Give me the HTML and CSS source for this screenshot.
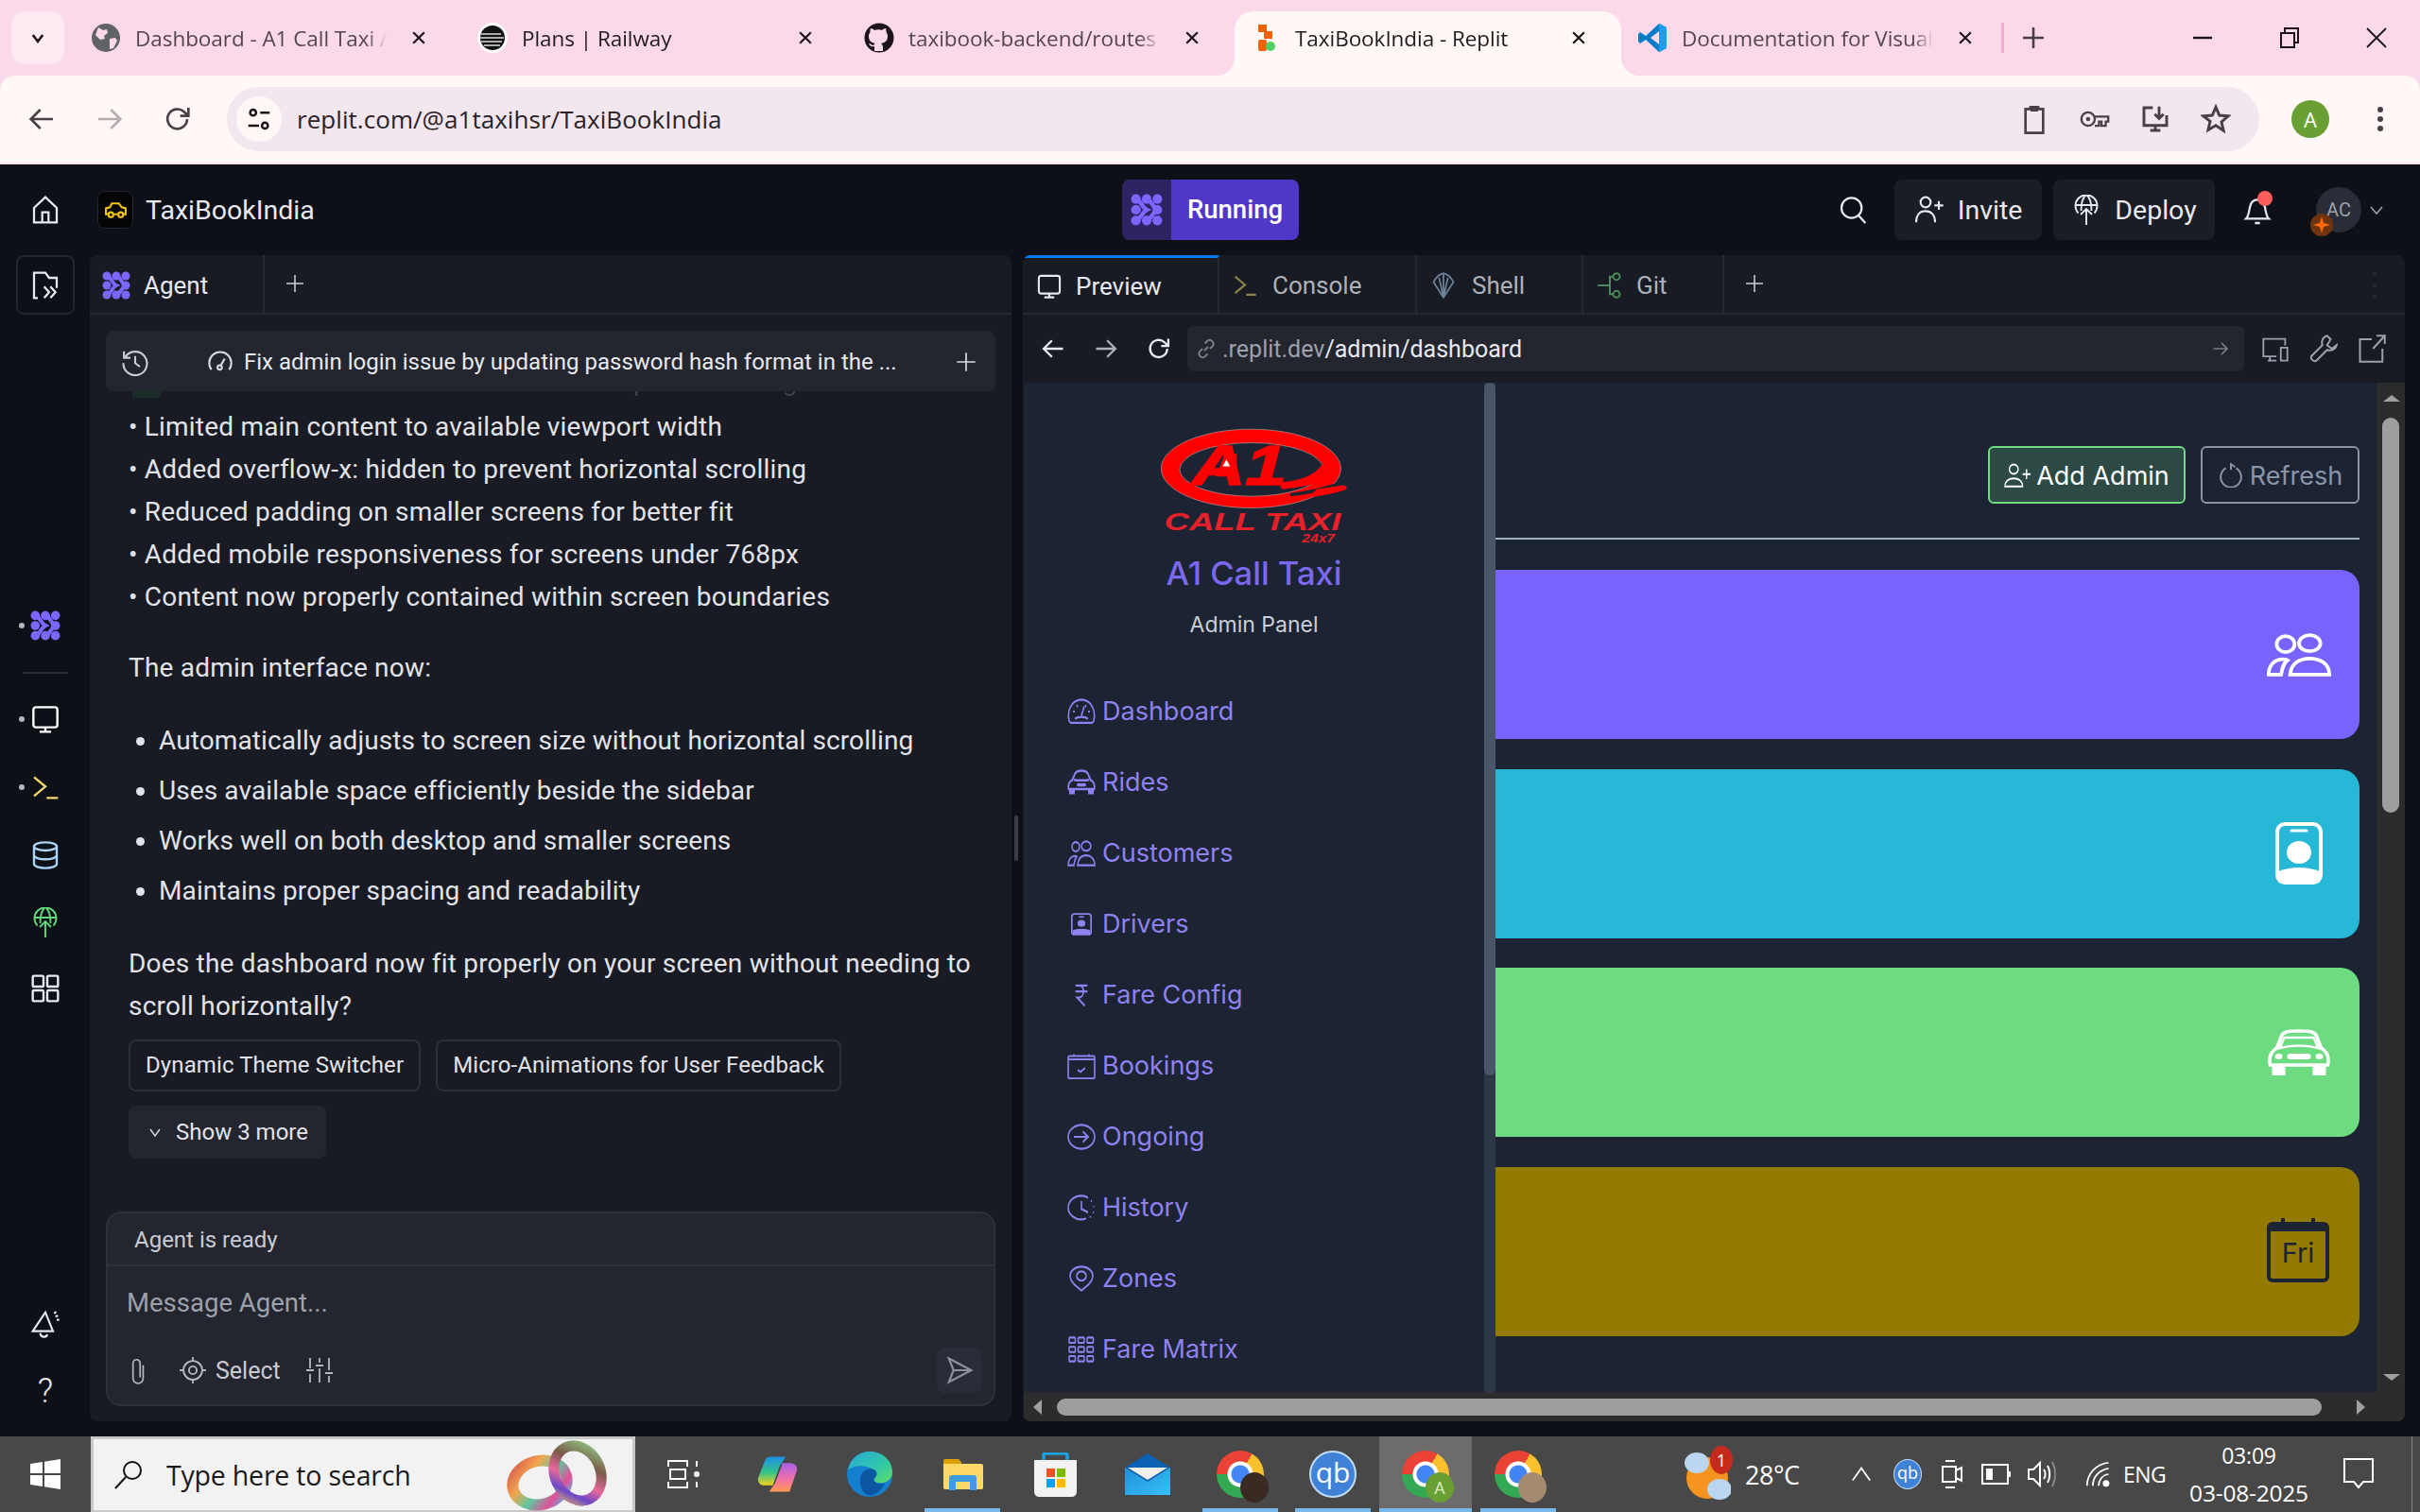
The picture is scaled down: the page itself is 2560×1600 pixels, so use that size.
FILE: index.html
```html
<!DOCTYPE html>
<html lang="en">
<head>
    <meta charset="UTF-8">
    <title>TaxiBookIndia - Replit</title>
    <link rel="stylesheet" href="styles.css">
</head>
<body>
    <svg class="sprite">
        <defs>
            <linearGradient id="ring-a" x1="0" y1="0" x2="1" y2="1">
                <stop offset="0" stop-color="#d8584c"/><stop offset=".3" stop-color="#f2a64e"/><stop offset=".55" stop-color="#5fc8a0"/><stop offset=".8" stop-color="#e0509a"/><stop offset="1" stop-color="#4cc0e8"/>
            </linearGradient>
            <linearGradient id="ring-b" x1="1" y1="0" x2="0" y2="1">
                <stop offset="0" stop-color="#8fd08a"/><stop offset=".35" stop-color="#7a5a48"/><stop offset=".6" stop-color="#e8689a"/><stop offset=".8" stop-color="#6a48c8"/><stop offset="1" stop-color="#f0b860"/>
            </linearGradient>
            <linearGradient id="cop-a" x1="0" y1="0" x2="0" y2="1">
                <stop offset="0" stop-color="#1b8fe8"/><stop offset=".55" stop-color="#35c48a"/><stop offset="1" stop-color="#f2d21c"/>
            </linearGradient>
            <linearGradient id="cop-b" x1="0" y1="0" x2="0" y2="1">
                <stop offset="0" stop-color="#a860e8"/><stop offset=".55" stop-color="#f070a8"/><stop offset="1" stop-color="#ff9a50"/>
            </linearGradient>
            <linearGradient id="edge-a" x1="0" y1="0" x2="1" y2="1">
                <stop offset="0" stop-color="#2aa8d8"/><stop offset=".6" stop-color="#30c8a8"/><stop offset="1" stop-color="#60e060"/>
            </linearGradient>
            <linearGradient id="mail-a" x1="0" y1="0" x2="1" y2="1">
                <stop offset="0" stop-color="#1e8fdc"/><stop offset="1" stop-color="#38c0f5"/>
            </linearGradient>
        </defs>
        <symbol id="i-agent" viewBox="0 0 24 24">
            <g fill="currentColor">
                <circle cx="4" cy="4" r="3.600"/><circle cx="12" cy="4" r="3.600"/><circle cx="20" cy="4" r="3.600"/>
                <circle cx="4" cy="12" r="3.600"/><circle cx="20" cy="12" r="3.600"/>
                <circle cx="4" cy="20" r="3.600"/><circle cx="12" cy="20" r="3.600"/><circle cx="20" cy="20" r="3.600"/>
            </g>
            <path d="M4 4C8 5 8 10 12 12C8 14 8 19 4 20M12 4C16 5 16 10 20 12C16 14 16 19 12 20" fill="none" stroke="currentColor" stroke-width="3.200"/>
        </symbol>
        <symbol id="i-back" viewBox="0 0 24 24"><path d="M21 12H4M11 4.500 3.500 12l7.500 7.500" fill="none" stroke="currentColor" stroke-width="2"/></symbol>
        <symbol id="i-fwd" viewBox="0 0 24 24"><path d="M3 12h17M13 4.500l7.500 7.500-7.500 7.500" fill="none" stroke="currentColor" stroke-width="2"/></symbol>
        <symbol id="i-reload" viewBox="0 0 24 24"><path d="M19.500 12A7.800 7.800 0 1 1 17 6.200L20 9M20.500 3v6.500H14" fill="none" stroke="currentColor" stroke-width="2"/></symbol>
        <symbol id="i-close" viewBox="0 0 24 24"><path d="M5 5l14 14M19 5 5 19" fill="none" stroke="currentColor" stroke-width="2.600"/></symbol>
        <symbol id="i-plus" viewBox="0 0 24 24"><path d="M12 3v18M3 12h18" fill="none" stroke="currentColor" stroke-width="1.600"/></symbol>
        <symbol id="i-monitor" viewBox="0 0 24 24"><path d="M4.500 2.500h15a2 2 0 0 1 2 2v12a2 2 0 0 1-2 2h-15a2 2 0 0 1-2-2v-12a2 2 0 0 1 2-2zM12 18.500v3.500M7.500 22h9" fill="none" stroke="currentColor" stroke-width="1.800"/></symbol>
        <symbol id="i-console" viewBox="0 0 24 24"><path d="M3 4l9 7.500L3 19M13 20.500h9" fill="none" stroke="currentColor" stroke-width="1.800"/></symbol>
        <symbol id="i-db" viewBox="0 0 24 24"><g fill="none" stroke="currentColor" stroke-width="1.800"><ellipse cx="12" cy="5" rx="9" ry="3.200"/><path d="M3 5v14c0 1.800 4 3.200 9 3.200s9-1.400 9-3.200V5M3 12c0 1.800 4 3.200 9 3.200s9-1.400 9-3.200"/></g></symbol>
        <symbol id="i-deploy" viewBox="0 0 24 32"><g fill="none" stroke="currentColor" stroke-width="1.900"><path d="M12 32V15M6 21l6-6 6 6"/><path d="M3.500 19.500A11.500 11.500 0 1 1 20.500 19.500M.5 11h23M12 0C8 3 6.500 8 6.500 17M12 0c4 3 5.500 8 5.500 17"/></g></symbol>
        <symbol id="i-grid" viewBox="0 0 24 24"><g fill="none" stroke="currentColor" stroke-width="1.800"><rect x="2" y="2" width="8.500" height="8.500" rx="1"/><rect x="13.500" y="2" width="8.500" height="8.500" rx="1"/><rect x="2" y="13.500" width="8.500" height="8.500" rx="1"/><rect x="13.500" y="13.500" width="8.500" height="8.500" rx="1"/></g></symbol>
        <symbol id="i-people" viewBox="0 0 36 24"><g fill="none" stroke="currentColor" stroke-width="2"><ellipse cx="10.500" cy="6" rx="5" ry="4.500"/><ellipse cx="24" cy="5.500" rx="6" ry="4.500"/><path d="M1 23c0-5 3-8.500 8-8.500 1 0 2 .2 2.500.5C9 17 8.500 20 8 23zM13 23c.5-6 5-9 11-9s11 3 11 9z"/></g></symbol>
        <symbol id="i-badge" viewBox="0 0 50 66"><rect x="2" y="2" width="46" height="62" rx="8" fill="none" stroke="currentColor" stroke-width="4"/><path d="M17 9h16" stroke="currentColor" stroke-width="3" stroke-linecap="round"/><ellipse cx="25" cy="32" rx="13" ry="12" fill="currentColor"/><path d="M3 52Q25 44 47 52V64H3z" fill="currentColor"/></symbol>
        <symbol id="i-car" viewBox="0 0 67 50"><g fill="none" stroke="currentColor" stroke-width="3.600"><path d="M3 38C1 28 5 23 10 20L15 7C17 3 21 2 33.500 2S50 3 52 7L57 20C62 23 66 28 64 38z"/><path d="M13 20Q33.500 15 54 20L49 9H18z" stroke-width="2.600"/></g><path d="M5 38h14v11H5zM48 38h14v11H48z" fill="currentColor"/><ellipse cx="12" cy="29" rx="4" ry="3" fill="currentColor"/><ellipse cx="55" cy="29" rx="4" ry="3" fill="currentColor"/><rect x="21" y="26" width="25" height="6" rx="3" fill="currentColor"/></symbol>
        <symbol id="i-gauge" viewBox="0 0 30 20"><g fill="none" stroke="currentColor" stroke-width="1.600"><path d="M2 17C-1 8 6 1 15 1s16 7 13 16c-.3 1-1 1.500-2 1.500H4c-1 0-1.700-.5-2-1.500z"/><path d="M15 13l3-7M6 10h2M22 10h2M10 5l1 1.500M20 5l-1 1.500M8 15.500c3-2 11-2 14 0"/></g></symbol>
        <symbol id="i-ring-arrow" viewBox="0 0 30 20"><g fill="none" stroke="currentColor" stroke-width="1.600"><ellipse cx="15" cy="10" rx="14" ry="9"/><path d="M7 10h15M16.500 6l5.500 4-5.500 4"/></g></symbol>
        <symbol id="i-clock" viewBox="0 0 30 20"><g fill="none" stroke="currentColor" stroke-width="1.600"><path d="M20 18c-3 1-8 1-11 0C3 16 1 13 1 10c0-5 6-9 14-9 3 0 5 .5 7 1.500" /><path d="M15 5v6l7 2.500"/><path d="M25 4.500l1 .8M28 8.500v1M28 13l-.5 1M25 16.500l-1 .7" stroke-width="1.400"/></g></symbol>
        <symbol id="i-pin" viewBox="0 0 30 20"><g fill="none" stroke="currentColor" stroke-width="1.600"><path d="M15 19C8 15 3 12 3 8c0-4 5-7 12-7s12 3 12 7c0 4-5 7-12 11z"/><ellipse cx="15" cy="8" rx="5" ry="3.500"/></g></symbol>
        <symbol id="i-matrix" viewBox="0 0 30 20"><g fill="none" stroke="currentColor" stroke-width="1.500"><rect x="2" y="1" width="6.500" height="4" rx=".8"/><rect x="11.500" y="1" width="6.500" height="4" rx=".8"/><rect x="21" y="1" width="6.500" height="4" rx=".8"/><rect x="2" y="8" width="6.500" height="4" rx=".8"/><rect x="11.500" y="8" width="6.500" height="4" rx=".8"/><rect x="21" y="8" width="6.500" height="4" rx=".8"/><rect x="2" y="15" width="6.500" height="4" rx=".8"/><rect x="11.500" y="15" width="6.500" height="4" rx=".8"/><rect x="21" y="15" width="6.500" height="4" rx=".8"/></g></symbol>
        <symbol id="i-cal" viewBox="0 0 30 20"><g fill="none" stroke="currentColor" stroke-width="1.600"><rect x="1" y="2.500" width="28" height="17" rx="1.500"/><path d="M1 5h28M7 1v2M23 1v2M11 13l3 1.500 5-3"/></g></symbol>
        <symbol id="i-rupee" viewBox="0 0 20 20"><path d="M3 2h14M3 7h14M3 2h5c6 0 6 10-1 10H5l9 7" fill="none" stroke="currentColor" stroke-width="1.800"/></symbol>
        <symbol id="i-carsm" viewBox="0 0 30 20"><g fill="none" stroke="currentColor" stroke-width="1.800"><path d="M1.500 15c-1-3.500 1-6 4-7l2.500-4.500C9 2 11 1 15 1s6 1 7 2.500L24.500 8c3 1 5 3.500 4 7z"/><path d="M7 8c3 .6 13 .6 16 0"/></g><path d="M2 15h6v4H2zM22 15h6v4h-6z" fill="currentColor"/><rect x="10" y="10.500" width="10" height="2.500" rx="1.200" fill="currentColor"/></symbol>
        <symbol id="i-peoplesm" viewBox="0 0 30 20"><g fill="none" stroke="currentColor" stroke-width="1.500"><ellipse cx="9" cy="5" rx="4" ry="3.500"/><ellipse cx="20" cy="4.500" rx="5" ry="3.500"/><path d="M1 19c0-4 3-7 7-7 1 0 1.500.2 2 .4C8 14 7.500 16.500 7 19zM11 19c.5-5 4-7.500 9-7.500s9 2.500 9 7.500z"/></g></symbol>
        <symbol id="i-badgesm" viewBox="0 0 26 26"><g fill="none" stroke="currentColor" stroke-width="2"><rect x="1" y="1" width="24" height="24" rx="3"/><path d="M10 4.500h6"/></g><ellipse cx="13" cy="12" rx="5" ry="4" fill="currentColor"/><path d="M2 25v-5c5-2 17-2 22 0v5z" fill="currentColor"/></symbol>
    </svg>

    <div class="tabstrip">
        <div class="tab-menu"><svg class="ico-16" viewBox="0 0 24 24"><path d="M5 8l7 9 7-9" fill="none" stroke="#1c1418" stroke-width="3.500"/></svg></div>
        <div class="tab">
            <span class="favicon"><svg viewBox="0 0 32 32"><circle cx="16" cy="16" r="15" fill="#5f6368"/><path d="M8 5l5 3 4-1 1 4-4 3 1 3-5 1-5-5zM20 17l6-1 2 3-4 8-4 1z" fill="#fbd9ea"/></svg></span>
            <span class="tab-title">Dashboard - A1 Call Taxi /</span>
            <svg class="tab-x"><use href="#i-close"/></svg>
        </div>
        <div class="tab">
            <span class="favicon"><svg viewBox="0 0 32 32"><circle cx="16" cy="16" r="16" fill="#fff"/><circle cx="16" cy="16" r="13" fill="#111"/><path d="M4 12h21M3 16h25M4 20h22M7 24h17" stroke="#ddd" stroke-width="1.500"/></svg></span>
            <span class="tab-title tab-dark">Plans | Railway</span>
            <svg class="tab-x"><use href="#i-close"/></svg>
        </div>
        <div class="tab">
            <span class="favicon"><svg viewBox="0 0 32 32"><circle cx="16" cy="16" r="15.500" fill="#1c1418"/><path d="M11 30v-5c-4 1-5-1-6-3 2 0 3 2 5 2 .5-1 1-2 2-2-5-1-7-3-7-8 0-2 1-3 1.500-4 0-1 0-3 .5-4 2 0 3 1 4 2 3-1 6-1 8 0 1-1 2-2 4-2 .5 1 .5 3 .5 4 .5 1 1.500 2 1.500 4 0 5-2 7-7 8 1 .7 2 2 2 4v4z" fill="#fbd9ea"/></svg></span>
            <span class="tab-title">taxibook-backend/routes</span>
            <svg class="tab-x"><use href="#i-close"/></svg>
        </div>
        <div class="tab tab-active">
            <span class="favicon"><svg viewBox="0 0 32 32"><rect x="8" y="2" width="9" height="8" fill="#f26207"/><rect x="14" y="9" width="9" height="8" fill="#f26207"/><rect x="8" y="18" width="9" height="12" rx="2" fill="#f26207"/><circle cx="21" cy="25" r="5" fill="#4fd16a"/></svg></span>
            <span class="tab-title tab-dark">TaxiBookIndia - Replit</span>
            <svg class="tab-x"><use href="#i-close"/></svg>
        </div>
        <div class="tab tab-last">
            <span class="favicon"><svg viewBox="0 0 32 32"><path d="M23 1l8 4v22l-8 4-14-13-6 4-2-2v-8l2-2 6 4z" fill="#0a7cc7"/><path d="M23 9l-9 7 9 7z" fill="#fbd9ea"/><path d="M23 1l8 4v22l-8 4z" fill="#1f9cf0"/></svg></span>
            <span class="tab-title">Documentation for Visual</span>
            <svg class="tab-x"><use href="#i-close"/></svg>
        </div>
        <span class="tab-sep"></span>
        <svg class="new-tab" viewBox="0 0 24 24"><path d="M12 1v22M1 12h22" stroke="#4a3f47" stroke-width="2.600"/></svg>
        <div class="win-btns">
            <svg viewBox="0 0 24 24"><path d="M2 12h20" stroke="#1c1418" stroke-width="2.400"/></svg>
            <svg viewBox="0 0 24 24"><path d="M3 7h14v15H3zM7 7V2h14v15h-4" fill="none" stroke="#1c1418" stroke-width="2"/></svg>
            <svg viewBox="0 0 24 24"><path d="M2 2l20 20M22 2 2 22" stroke="#1c1418" stroke-width="1.800"/></svg>
        </div>
    </div>

    <div class="toolbar">
        <svg class="nav-btn"><use href="#i-back"/></svg>
        <svg class="nav-btn nav-off"><use href="#i-fwd"/></svg>
        <svg class="nav-btn"><use href="#i-reload"/></svg>
        <div class="omnibox">
            <span class="site-ico"><svg viewBox="0 0 24 24"><g fill="none" stroke="#1c1418" stroke-width="2"><circle cx="7" cy="6.500" r="2.500"/><circle cx="17" cy="17.500" r="2.500"/><path d="M13 6.500h8M3 17.500h9"/></g></svg></span>
            <span class="url-text">replit.com/@a1taxihsr/TaxiBookIndia</span>
            <div class="omni-icons">
                <svg viewBox="0 0 24 24"><path d="M5 4h14v19H5zM9 4V2.500h6V4" fill="none" stroke="#4a3f47" stroke-width="2"/><path d="M9 3h6v3H9z" fill="#4a3f47"/></svg>
                <svg viewBox="0 0 36 24"><g fill="none" stroke="#4a3f47" stroke-width="2.600"><circle cx="10" cy="12" r="8"/><path d="M18 9h16v6h-3v5h-5v-5h-3v5h-5"/></g><circle cx="10" cy="12" r="2.500" fill="#4a3f47"/></svg>
                <svg viewBox="0 0 24 24"><path d="M10 3H3v14h18V9M8 21h8M12 17v4M15 2v9M11.500 8l3.500 3.500L18.500 8" fill="none" stroke="#4a3f47" stroke-width="2.200"/></svg>
                <svg viewBox="0 0 24 24"><path d="M12 2.500l2.800 6.500 7 .6-5.300 4.600 1.600 6.900L12 17l-6.100 3.600 1.600-6.900L2.200 9.600l7-.6z" fill="none" stroke="#4a3f47" stroke-width="2.200"/></svg>
            </div>
        </div>
        <span class="profile">A</span>
        <svg class="kebab" viewBox="0 0 8 32"><circle cx="4" cy="6" r="3" fill="#4a3f47"/><circle cx="4" cy="16" r="3" fill="#4a3f47"/><circle cx="4" cy="26" r="3" fill="#4a3f47"/></svg>
    </div>

    <div class="app">
        <div class="topbar">
            <div class="top-left">
                <span class="home"><svg viewBox="0 0 24 24"><path d="M3 10.500 12 2l9 8.500V22H3zM9.500 22v-8h5v8" fill="none" stroke="#e8e9ee" stroke-width="1.700"/></svg></span>
                <span class="project-ico"><svg viewBox="0 0 24 16"><g fill="none" stroke="#f5c518" stroke-width="2"><path d="M4 12H2V6L6 5 8 1H15L18 5 22 6V12H20M10 12H14"/><circle cx="7" cy="12.500" r="2.500"/><circle cx="17" cy="12.500" r="2.500"/></g></svg></span>
                <span class="project-name">TaxiBookIndia</span>
            </div>
            <div class="run-btn">
                <span class="run-ico"><svg><use href="#i-agent"/></svg></span>
                <span class="run-label">Running</span>
            </div>
            <div class="top-right">
                <svg class="top-search" viewBox="0 0 24 24"><circle cx="11" cy="10.500" r="8" fill="none" stroke="#e8e9ee" stroke-width="1.700"/><path d="M16.500 16.500 22 22.500" stroke="#e8e9ee" stroke-width="1.700"/></svg>
                <div class="top-btn btn-invite"><svg viewBox="0 0 24 24"><g fill="none" stroke="#e8e9ee" stroke-width="1.600"><circle cx="9" cy="6" r="4"/><path d="M1.500 22c0-6 3-9 7.500-9s7.500 3 7.500 9M19.500 5v7M16 8.500h7"/></g></svg>Invite</div>
                <div class="top-btn btn-deploy"><svg><use href="#i-deploy"/></svg>Deploy</div>
                <span class="bell"><svg viewBox="0 0 24 24"><path d="M3 19c2-2 2-4 3-9 .7-4 3-6 6-6s5.300 2 6 6c1 5 1 7 3 9zM10 22.500h4" fill="none" stroke="#e8e9ee" stroke-width="1.700"/></svg><i class="bell-dot"></i></span>
                <span class="user">AC<svg class="user-badge" viewBox="0 0 24 24"><circle cx="12" cy="12" r="12" fill="#6e3410"/><path d="M12 3l2 7 7 2-7 2-2 7-2-7-7-2 7-2z" fill="#ff6a00"/></svg></span>
                <svg class="user-chev" viewBox="0 0 16 16"><path d="M2 5l6 7 6-7" fill="none" stroke="#9da1ab" stroke-width="1.500"/></svg>
            </div>
        </div>

        <div class="workspace">
            <div class="rail">
                <div class="rail-files"><svg viewBox="0 0 24 24"><path d="M6 22H3V2h9l3 4h6v8M11 13l4 4.500-4 4.500M16 13l4 4.500-4 4.500" fill="none" stroke="#e8e9ee" stroke-width="1.700"/></svg></div>
                <div class="rail-item rail-agent on"><svg><use href="#i-agent"/></svg></div>
                <div class="rail-div"></div>
                <div class="rail-item rail-monitor on"><svg><use href="#i-monitor"/></svg></div>
                <div class="rail-item rail-console on"><svg><use href="#i-console"/></svg></div>
                <div class="rail-item rail-db"><svg><use href="#i-db"/></svg></div>
                <div class="rail-item rail-deploy"><svg><use href="#i-deploy"/></svg></div>
                <div class="rail-item rail-grid"><svg><use href="#i-grid"/></svg></div>
                <div class="rail-item rail-bell"><svg viewBox="0 0 24 24"><path d="M2 17 12 2l6 15zM8 18.500c0 3.500 5 4 5.500 1M19 3l1.500-1.500M21 8h2M20 5.500l2-.8" fill="none" stroke="#e8e9ee" stroke-width="1.600"/></svg></div>
                <div class="rail-item rail-help">?</div>
            </div>

            <section class="agent-panel">
                <div class="pane-tabs">
                    <div class="pane-tab agent-tab"><svg class="agent-ico"><use href="#i-agent"/></svg>Agent</div>
                    <svg class="pane-plus"><use href="#i-plus"/></svg>
                </div>
                <div class="messages">
                    <div class="thread-head">
                        <svg class="th-hist" viewBox="0 0 24 24"><path d="M3.500 8A10 10 0 1 1 2 13M2.500 3v5.500H8M12 7v6l4 3" fill="none" stroke="#c9cbd3" stroke-width="1.700"/></svg>
                        <svg class="th-gauge" viewBox="0 0 24 24"><path d="M4 19A10 10 0 1 1 20 19M12 16l4-7" fill="none" stroke="#d8dae0" stroke-width="1.800"/><circle cx="11.500" cy="17" r="2" fill="none" stroke="#d8dae0" stroke-width="1.800"/></svg>
                        <span class="th-title">Fix admin login issue by updating password hash format in the ...</span>
                        <svg class="th-plus"><use href="#i-plus"/></svg>
                    </div>
                    <p class="msg-line msg-faded"><span class="check"></span>Fixed main content width for better responsive design</p>
                    <p class="msg-line">• Limited main content to available viewport width</p>
                    <p class="msg-line">• Added overflow-x: hidden to prevent horizontal scrolling</p>
                    <p class="msg-line">• Reduced padding on smaller screens for better fit</p>
                    <p class="msg-line">• Added mobile responsiveness for screens under 768px</p>
                    <p class="msg-line">• Content now properly contained within screen boundaries</p>
                    <p class="msg-line msg-para">The admin interface now:</p>
                    <ul class="msg-list">
                        <li>Automatically adjusts to screen size without horizontal scrolling</li>
                        <li>Uses available space efficiently beside the sidebar</li>
                        <li>Works well on both desktop and smaller screens</li>
                        <li>Maintains proper spacing and readability</li>
                    </ul>
                    <p class="msg-line msg-ask">Does the dashboard now fit properly on your screen without needing to scroll horizontally?</p>
                    <div class="chips">
                        <span class="chip">Dynamic Theme Switcher</span>
                        <span class="chip">Micro-Animations for User Feedback</span>
                    </div>
                    <div class="show-more"><svg viewBox="0 0 16 16"><path d="M3 5l5 7 5-7" fill="none" stroke="#d8dae0" stroke-width="1.400"/></svg>Show 3 more</div>
                </div>
                <div class="composer">
                    <div class="comp-status">Agent is ready</div>
                    <div class="comp-input">Message Agent...</div>
                    <div class="comp-tools">
                        <svg class="ct-clip" viewBox="0 0 20 28"><path d="M15 8v13a5 5 0 0 1-10 0V6a3.500 3.500 0 0 1 7 0v14" fill="none" stroke="#b4b7c0" stroke-width="1.600" transform="translate(1 1)"/></svg>
                        <svg class="ct-target" viewBox="0 0 24 24"><g fill="none" stroke="#b4b7c0" stroke-width="1.600"><circle cx="12" cy="12" r="8.500"/><circle cx="12" cy="12" r="3.500"/><path d="M12 0v3.500M12 20.500V24M0 12h3.500M20.500 12H24"/></g></svg>
                        <span class="ct-select">Select</span>
                        <svg class="ct-sliders" viewBox="0 0 28 28"><path d="M4 1v11M4 18v9M14 1v5M14 12v15M24 1v13M24 20v7M0 14h8M10 9h8M20 17h8" fill="none" stroke="#b4b7c0" stroke-width="1.800"/></svg>
                        <span class="ct-send"><svg viewBox="0 0 24 24"><path d="M3 2l19 10L3 22l4-10zM7 12h15" fill="none" stroke="#8e919b" stroke-width="1.700"/></svg></span>
                    </div>
                </div>
            </section>

            <div class="splitter"><i></i></div>

            <section class="preview-panel">
                <div class="pane-tabs">
                    <div class="pane-tab tab-preview"><svg class="pt-ico pt-white"><use href="#i-monitor"/></svg>Preview</div>
                    <div class="pane-tab tab-console"><svg class="pt-ico pt-yellow"><use href="#i-console"/></svg>Console</div>
                    <div class="pane-tab tab-shell">
                        <svg class="pt-ico pt-slate" viewBox="0 0 24 24"><path d="M12 23 3 9c2-4 5-7 9-8 4 1 7 4 9 8zM12 23 8 5M12 23l4-18M12 23V1" fill="none" stroke="currentColor" stroke-width="1.500"/></svg>Shell</div>
                    <div class="pane-tab tab-git">
                        <svg class="pt-ico pt-green" viewBox="0 0 24 24"><g fill="none" stroke="currentColor" stroke-width="1.700"><circle cx="18" cy="4" r="3"/><circle cx="18" cy="20" r="3"/><path d="M15 4h-3v16h3M1 12h11"/></g></svg>Git</div>
                    <svg class="pane-plus"><use href="#i-plus"/></svg>
                    <svg class="pane-dots" viewBox="0 0 8 32"><circle cx="4" cy="4" r="2" fill="#2a2d37"/><circle cx="4" cy="16" r="2" fill="#2a2d37"/><circle cx="4" cy="28" r="2" fill="#2a2d37"/></svg>
                </div>
                <div class="urlrow">
                    <svg class="ur-btn"><use href="#i-back"/></svg>
                    <svg class="ur-btn ur-dim"><use href="#i-fwd"/></svg>
                    <svg class="ur-btn"><use href="#i-reload"/></svg>
                    <div class="urlbar">
                        <svg class="ub-link" viewBox="0 0 24 24"><path d="M10 14 14 10M8 12l-3 3a4 4 0 0 0 5.500 5.500l3-3M16 12l3-3A4 4 0 0 0 13.500 3.500l-3 3" fill="none" stroke="#7a7d87" stroke-width="2"/></svg>
                        <span class="ub-host">.replit.dev</span><span class="ub-path">/admin/dashboard</span>
                        <svg class="ub-go"><use href="#i-fwd"/></svg>
                    </div>
                    <svg class="ur-tool" viewBox="0 0 26 24"><path d="M14 19H2V3h20v6M6 23h8M8 19v4M18 11h6v12h-6z" fill="none" stroke="#9da1ab" stroke-width="1.600"/></svg>
                    <svg class="ur-tool" viewBox="0 0 24 24"><path d="M15 1c-4 1-5 5-4 8L2 18c-2 2 2 6 4 4l9-9c3 1 7 0 8-4l-4 3-4-3 3-5z" fill="none" stroke="#9da1ab" stroke-width="1.600"/></svg>
                    <svg class="ur-tool" viewBox="0 0 24 24"><path d="M12 4H2v19h19V12M13 12 23 1M16 1h7v7" fill="none" stroke="#9da1ab" stroke-width="1.600"/></svg>
                </div>
                <div class="site">
                    <div class="site-top">
                        <aside class="side">
                            <svg class="logo" viewBox="0 0 900 440">
                                <path fill-rule="evenodd" fill="#ff0000" stroke="#c9c9c9" stroke-width="1.500" d="M145 197a285 125 0 1 0 570 0a285 125 0 1 0 -570 0zM204 200a228 85 0 1 0 456 0a228 85 0 1 0 -456 0z"/>
                                <path d="M555 280Q640 272 750 232" fill="none" stroke="#1c2333" stroke-width="11"/>
                                <path d="M655 185Q625 232 530 240Q516 252 530 263Q640 250 700 222z" fill="#ff0000"/>
                                <path d="M640 262 725 250Q742 256 728 265Q690 278 610 290z" fill="#ff0000"/>
                                <text x="243" y="250" class="logo-a1" textLength="300" lengthAdjust="spacingAndGlyphs">A1</text>
                                <path d="M318 222 348 150H385V222z" fill="#ff0000"/>
                                <path d="M340 190h24l-12-22z" fill="#fff"/>
                                <text x="155" y="392" class="logo-call" textLength="560" lengthAdjust="spacingAndGlyphs">CALL TAXI</text>
                                <text x="592" y="433" class="logo-247" textLength="104" lengthAdjust="spacingAndGlyphs">24x7</text>
                            </svg>
                            <h2 class="side-title">A1 Call Taxi</h2>
                            <div class="side-sub">Admin Panel</div>
                            <nav class="side-nav">
                                <a><svg viewBox="0 0 30 20" preserveAspectRatio="none"><use href="#i-gauge"/></svg>Dashboard</a>
                                <a><svg viewBox="0 0 30 20" preserveAspectRatio="none"><use href="#i-carsm"/></svg>Rides</a>
                                <a><svg viewBox="0 0 30 20" preserveAspectRatio="none"><use href="#i-peoplesm"/></svg>Customers</a>
                                <a><svg viewBox="0 0 30 26" preserveAspectRatio="none"><use href="#i-badgesm" x="4" width="22" height="26"/></svg>Drivers</a>
                                <a><svg viewBox="0 0 30 20" preserveAspectRatio="none"><use href="#i-rupee" x="6" width="18" height="20"/></svg>Fare Config</a>
                                <a><svg viewBox="0 0 30 20" preserveAspectRatio="none"><use href="#i-cal"/></svg>Bookings</a>
                                <a><svg viewBox="0 0 30 20" preserveAspectRatio="none"><use href="#i-ring-arrow"/></svg>Ongoing</a>
                                <a><svg viewBox="0 0 30 20" preserveAspectRatio="none"><use href="#i-clock"/></svg>History</a>
                                <a><svg viewBox="0 0 30 20" preserveAspectRatio="none"><use href="#i-pin"/></svg>Zones</a>
                                <a><svg viewBox="0 0 30 20" preserveAspectRatio="none"><use href="#i-matrix"/></svg>Fare Matrix</a>
                            </nav>
                        </aside>
                        <div class="side-scroll"><i></i></div>
                        <main class="dash">
                            <div class="dash-actions">
                                <span class="dash-btn add-admin"><svg viewBox="0 0 30 20" preserveAspectRatio="none"><g fill="none" stroke="#fff" stroke-width="1.500"><ellipse cx="11" cy="5" rx="5" ry="3.800"/><path d="M1 19c0-4 4-6.500 10-6.500S21 15 21 19zM21 9h9M25.500 5v8"/></g></svg>Add Admin</span>
                                <span class="dash-btn refresh"><svg viewBox="0 0 24 24"><path d="M7 5a10 10 0 1 0 10 0M12 6.500V1l4 3" fill="none" stroke="#8b95a8" stroke-width="1.800"/></svg>Refresh</span>
                            </div>
                            <div class="dash-rule"></div>
                            <div class="stat stat-purple"><svg class="stat-ico"><use href="#i-people"/></svg></div>
                            <div class="stat stat-cyan"><svg class="stat-ico stat-badge"><use href="#i-badge"/></svg></div>
                            <div class="stat stat-green"><svg class="stat-ico"><use href="#i-car"/></svg></div>
                            <div class="stat stat-olive">
                                <span class="fri">Fri</span>
                            </div>
                        </main>
                        <div class="vscroll">
                            <i class="arrow-up"></i>
                            <i class="vthumb"></i>
                            <i class="arrow-down"></i>
                        </div>
                    </div>
                    <div class="hscroll">
                        <i class="arrow-left"></i>
                        <i class="hthumb"></i>
                        <i class="arrow-right"></i>
                    </div>
                </div>
            </section>
        </div>
    </div>

    <footer class="taskbar">
        <div class="start"><svg viewBox="0 0 32 32"><path d="M0 5l13-2v12H0zM15 2.700 32 0v15H15zM0 17h13v12L0 27zM15 17h17v15l-17-2.700z" fill="#fff"/></svg></div>
        <div class="tb-search">
            <svg class="tb-lens" viewBox="0 0 32 32"><circle cx="20" cy="11" r="9" fill="none" stroke="#111" stroke-width="2"/><path d="M13 18 2 30" stroke="#111" stroke-width="2"/></svg>
            <span class="tb-hint">Type here to search</span>
            <svg class="tb-rings" viewBox="0 0 116 76"><ellipse cx="36" cy="46" rx="29" ry="23" fill="none" stroke="url(#ring-a)" stroke-width="12" transform="rotate(-15 36 46)"/><ellipse cx="76" cy="36" rx="24" ry="30" fill="none" stroke="url(#ring-b)" stroke-width="11" transform="rotate(-25 76 36)"/></svg>
        </div>
        <div class="tb-apps">
            <span class="tb-app"><svg class="app-taskview" viewBox="0 0 34 30"><path d="M1 7V1h20v6M1 23v6h20v-6M3 10h16v10H3zM31 1v6M31 23v6" fill="none" stroke="#fff" stroke-width="2"/><circle cx="31" cy="15" r="3" fill="#fff"/></svg></span>
            <span class="tb-app"><svg class="app-copilot" viewBox="0 0 44 40"><path d="M9 4C10 2 12 1 15 1H31L25 10 17 32H8C3 32 0 28 1 24z" fill="url(#cop-a)"/><path d="M35 39C34 39 32 39 29 39H13L19 30 27 8H36C41 8 44 12 43 16z" fill="url(#cop-b)"/><path d="M17 32 25 10H27L19 30z" fill="#484848"/></svg></span>
            <span class="tb-app"><svg class="app-edge" viewBox="0 0 48 48"><circle cx="24" cy="24" r="24" fill="#1580d0"/><path d="M1 20C4 6 14 0 24 0C38 0 48 10 48 22C48 30 40 34 34 33C30 33 28 31 29 28C32 26 32 22 28 19C20 14 6 14 1 20z" fill="url(#edge-a)"/><path d="M14 34C12 24 20 15 30 20C33 23 31 27 28 29C28 33 33 35 40 34C36 42 28 48 22 46C17 44 15 39 14 34z" fill="#0c55a0"/></svg></span>
            <span class="tb-app tb-run"><svg class="app-files" viewBox="0 0 43 34"><path d="M1 3Q1 1 3 1H17L20 4V12H1z" fill="#dda000"/><path d="M1 6H41Q43 6 43 8V31Q43 33 41 33H3Q1 33 1 31z" fill="#ffd868"/><path d="M7 34V21Q7 18 10 18H33Q36 18 36 21V34H29V25H14V34z" fill="#3f9ce0"/></svg></span>
            <span class="tb-app"><svg class="app-store" viewBox="0 0 45 47"><path d="M10 9V3Q10 1 12 1H33Q35 1 35 3V9" fill="none" stroke="#1ba1e2" stroke-width="3.500"/><path d="M0 8H45V41Q45 47 39 47H6Q0 47 0 41z" fill="#f3f3f3"/><rect x="13" y="17" width="9" height="9" fill="#f25022"/><rect x="24" y="17" width="9" height="9" fill="#7fba00"/><rect x="13" y="28" width="9" height="9" fill="#00a4ef"/><rect x="24" y="28" width="9" height="9" fill="#ffb900"/></svg></span>
            <span class="tb-app"><svg class="app-mail" viewBox="0 0 48 44"><path d="M0 15 24 0 48 15 24 30z" fill="#0b62b4"/><path d="M3 15H45L24 28z" fill="#eee"/><path d="M0 15 24 30 48 15V44H0z" fill="url(#mail-a)"/></svg></span>
            <span class="tb-app tb-run tb-chrome"><i class="chrome"></i><i class="over over-dark"></i></span>
            <span class="tb-app tb-run"><span class="qb">qb</span></span>
            <span class="tb-app tb-run tb-active tb-chrome"><i class="chrome"></i><i class="over over-green">A</i></span>
            <span class="tb-app tb-run tb-chrome"><i class="chrome"></i><i class="over over-tan"></i></span>
        </div>
        <svg class="tr-weather" viewBox="0 0 50 60"><circle cx="25" cy="34" r="22" fill="#f5941e"/><ellipse cx="14" cy="18" rx="13" ry="11" fill="#bcd6f2"/><ellipse cx="38" cy="46" rx="13" ry="11" fill="#bcd6f2"/></svg>
        <span class="tr-badge">1</span>
        <span class="tr-temp">28°C</span>
        <svg class="tr-caret" viewBox="0 0 24 24"><path d="M2 19 12 5l10 14" fill="none" stroke="#fff" stroke-width="2"/></svg>
        <span class="qb qb-small">qb</span>
        <svg class="tr-meet" viewBox="0 0 24 34"><path d="M5 3h10M5 31h10M2 9h14v16H2zM16 13l6-3v14l-6-3" fill="none" stroke="#fff" stroke-width="2"/></svg>
        <svg class="tr-batt" viewBox="0 0 32 22"><path d="M1 1h27v20H1zM30 8v6" fill="none" stroke="#fff" stroke-width="2"/><rect x="5" y="5" width="7" height="12" fill="#fff"/></svg>
        <svg class="tr-spk" viewBox="0 0 32 32"><path d="M2 11h5l7-7v24l-7-7H2zM18 11c2 3 2 7 0 10M22 7c3 5 3 13 0 18" fill="none" stroke="#fff" stroke-width="2"/><path d="M27 3c4 8 4 18 0 26" fill="none" stroke="#888" stroke-width="2"/></svg>
        <svg class="tr-wifi" viewBox="0 0 32 32"><path d="M2 30C2 16 12 4 28 2M9 30C9 20 16 11 28 9M16 30c0-6 4-13 12-14" fill="none" stroke="#fff" stroke-width="2"/><circle cx="25" cy="27" r="4" fill="#fff"/></svg>
        <span class="tr-lang">ENG</span>
        <div class="tr-clock"><div>03:09</div><div class="tr-date">03-08-2025</div></div>
        <svg class="tr-note" viewBox="0 0 32 34"><path d="M1 1h30v24H21l-5 6-5-6H1z" fill="none" stroke="#fff" stroke-width="2"/></svg>
        <span class="tr-edge"></span>
    </footer>
</body>
</html>
```

FILE: styles.css
```css
html, body {
    margin: 0;
    padding: 0;
}
body {
    width: 2560px;
    height: 1600px;
    overflow: hidden;
    display: flex;
    flex-direction: column;
    background-color: #fbd9ea;
    font-family: Roboto, "Noto Sans", sans-serif;
}
svg {
    display: block;
    flex: none;
}
i {
    display: block;
    font-style: normal;
}
p, ul, h2 {
    margin: 0;
    padding: 0;
}
.sprite {
    position: absolute;
    width: 0;
    height: 0;
}

/* browser tabs */
.tabstrip {
    height: 80px;
    display: flex;
    align-items: flex-end;
    padding-left: 12px;
    font-family: "Open Sans", sans-serif;
}
.tab-menu {
    width: 56px;
    height: 56px;
    margin: 0 11px 12px 0;
    background-color: #fdeaf3;
    border-radius: 16px;
    display: flex;
    align-items: center;
    justify-content: center;
}
.ico-16 {
    width: 18px;
    height: 18px;
}
.tab {
    width: 409px;
    height: 68px;
    flex: none;
    display: flex;
    align-items: center;
    padding: 0 0 12px 17px;
    box-sizing: border-box;
    position: relative;
}
.favicon {
    width: 32px;
    height: 32px;
    margin-right: 15px;
    flex: none;
}
.tab-title {
    width: 266px;
    font-size: 22.500px;
    letter-spacing: -0.05px;
    color: #54464e;
    white-space: nowrap;
    overflow: hidden;
    -webkit-mask-image: linear-gradient(90deg, #000 92%, transparent 100%);
    mask-image: linear-gradient(90deg, #000 92%, transparent 100%);
}
.tab-dark {
    color: #1f1a1d;
}
.tab-x {
    width: 20px;
    height: 20px;
    margin-left: 24px;
    color: #1c1418;
}
.tab-active {
    background-color: #fff8f6;
    border-radius: 20px 20px 0 0;
}
.tab-active::before,
.tab-active::after {
    content: "";
    position: absolute;
    bottom: 0;
    width: 20px;
    height: 20px;
}
.tab-active::before {
    left: -20px;
    background: radial-gradient(circle at 0 0, transparent 20px, #fff8f6 20.500px);
}
.tab-active::after {
    right: -20px;
    background: radial-gradient(circle at 100% 0, transparent 20px, #fff8f6 20.500px);
}
.tab-last {
    width: 402px;
}
.tab-sep {
    width: 3px;
    height: 32px;
    margin: 0 0 24px 0;
    background-color: #f5a8d2;
    flex: none;
}
.new-tab {
    width: 24px;
    height: 24px;
    margin: 0 0 28px 19px;
}
.win-btns {
    margin-left: auto;
    display: flex;
    gap: 68px;
    padding: 0 34px 28px 0;
}
.win-btns svg {
    width: 24px;
    height: 24px;
}

/* address bar */
.toolbar {
    height: 92px;
    border-bottom: 2px solid #fae3e6;
    background-color: #fff8f6;
    border-radius: 16px 16px 0 0;
    display: flex;
    align-items: center;
    padding-left: 28px;
    font-family: "Open Sans", sans-serif;
}
.nav-btn {
    width: 32px;
    height: 32px;
    margin-right: 40px;
    color: #4a3f47;
}
.nav-off {
    color: #b5adb1;
}
.omnibox {
    width: 2150px;
    height: 68px;
    margin-left: -4px;
    background-color: #f2e6ef;
    border-radius: 34px;
    display: flex;
    align-items: center;
    padding-left: 10px;
    box-sizing: border-box;
}
.site-ico {
    width: 48px;
    height: 48px;
    background-color: #fff8f6;
    border-radius: 50%;
    display: flex;
    align-items: center;
    justify-content: center;
    margin-right: 16px;
}
.site-ico svg {
    width: 30px;
    height: 30px;
}
.url-text {
    font-size: 26px;
    letter-spacing: .05px;
    color: #2a2226;
}
.omni-icons {
    margin-left: auto;
    display: flex;
    gap: 32px;
    padding-right: 30px;
}
.omni-icons svg {
    width: 32px;
    height: 32px;
}
.profile {
    width: 40px;
    height: 40px;
    margin-left: 34px;
    background-color: #6a9f34;
    border-radius: 50%;
    color: #fff;
    font-size: 22px;
    line-height: 40px;
    text-align: center;
    flex: none;
}
.kebab {
    width: 8px;
    height: 32px;
    margin-left: 50px;
}

/* replit top bar */
.app {
    height: 1346px;
    flex: none;
    background-color: #0e1018;
    color: #e8e9ee;
    display: flex;
    flex-direction: column;
}
.topbar {
    height: 96px;
    flex: none;
    display: flex;
    align-items: center;
}
.top-left {
    width: 1187px;
    display: flex;
    align-items: center;
    flex: none;
}
.home {
    width: 96px;
    display: flex;
    justify-content: center;
}
.home svg {
    width: 32px;
    height: 32px;
}
.project-ico {
    width: 38px;
    height: 40px;
    margin-left: 7px;
    background-color: #050505;
    border: 1px solid #23262f;
    border-radius: 8px;
    box-sizing: border-box;
    display: flex;
    align-items: center;
    justify-content: center;
}
.project-ico svg {
    width: 25px;
    height: 17px;
}
.project-name {
    margin-left: 13px;
    font-size: 28.500px;
}
.run-btn {
    display: flex;
    height: 64px;
    border-radius: 8px;
    overflow: hidden;
}
.run-ico {
    width: 52px;
    background-color: #2e2463;
    display: flex;
    align-items: center;
    justify-content: center;
    color: #7d66ff;
}
.run-ico svg {
    width: 34px;
    height: 36px;
}
.run-label {
    width: 135px;
    background-color: #5037c7;
    font-size: 27.500px;
    font-weight: 500;
    line-height: 64px;
    text-align: center;
    color: #fff;
}
.top-right {
    margin-left: auto;
    display: flex;
    align-items: center;
    padding-right: 38px;
}
.top-search {
    width: 32px;
    height: 32px;
    margin-right: 28px;
}
.top-btn {
    height: 64px;
    background-color: #1a1d26;
    border-radius: 8px;
    display: flex;
    align-items: center;
    justify-content: center;
    gap: 14px;
    font-size: 28.500px;
    box-sizing: border-box;
}
.top-btn svg {
    width: 32px;
    height: 32px;
}
.btn-invite {
    width: 156px;
}
.btn-deploy {
    width: 171px;
    margin-left: 12px;
}
.bell {
    position: relative;
    margin-left: 29px;
}
.bell svg {
    width: 32px;
    height: 36px;
}
.bell-dot {
    position: absolute;
    top: -2px;
    right: 0;
    width: 16px;
    height: 16px;
    background-color: #ff5c5c;
    border-radius: 50%;
}
.user {
    width: 48px;
    height: 48px;
    margin-left: 46px;
    background-color: #2a2d37;
    border-radius: 50%;
    position: relative;
    font-size: 20px;
    line-height: 48px;
    text-align: center;
    color: #9da1ab;
}
.user-badge {
    position: absolute;
    left: -6px;
    bottom: -4px;
    width: 24px;
    height: 24px;
}
.user-chev {
    width: 16px;
    height: 16px;
    margin-left: 8px;
}

/* workspace */
.workspace {
    flex: 1;
    min-height: 0;
    display: flex;
    padding-bottom: 16px;
}
.rail {
    width: 95px;
    flex: none;
    display: flex;
    flex-direction: column;
    padding-bottom: 12px;
    box-sizing: border-box;
}
.rail-files {
    width: 62px;
    height: 63px;
    margin-left: 17px;
    border: 2px solid #23262f;
    border-radius: 8px;
    box-sizing: border-box;
    display: flex;
    align-items: center;
    justify-content: center;
}
.rail-files svg {
    width: 32px;
    height: 36px;
}
.rail-item {
    width: 40px;
    height: 40px;
    margin-left: 28px;
    display: flex;
    align-items: center;
    justify-content: center;
    position: relative;
    flex: none;
}
.rail-item svg {
    width: 32px;
    height: 32px;
}
.rail-item.on::before {
    content: "";
    position: absolute;
    left: -8px;
    top: 17px;
    width: 6px;
    height: 6px;
    border-radius: 50%;
    background-color: #b4b7c0;
}
.rail-agent {
    margin-top: 309px;
    color: #7d66ff;
}
.rail-div {
    width: 48px;
    height: 2px;
    margin: 29px 0 0 24px;
    background-color: #2a2d37;
}
.rail-monitor {
    margin-top: 28px;
    color: #fff;
}
.rail-console {
    margin-top: 32px;
    color: #f5d76e;
}
.rail-db {
    margin-top: 32px;
    color: #a8d4f5;
}
.rail-deploy {
    margin-top: 31px;
    color: #62d978;
}
.rail-grid {
    margin-top: 30px;
    color: #e8e9ee;
}
.rail-bell {
    margin-top: auto;
}
.rail-help {
    margin-top: 30px;
    font-size: 36px;
    font-weight: 300;
    color: #e8e9ee;
}

/* agent pane */
.agent-panel {
    width: 975px;
    flex: none;
    background-color: #181b24;
    border-radius: 8px;
    display: flex;
    flex-direction: column;
    overflow: hidden;
}
.pane-tabs {
    height: 63px;
    flex: none;
    box-sizing: border-box;
    border-bottom: 2px solid #262932;
    display: flex;
    align-items: stretch;
    position: relative;
}
.pane-tab {
    display: flex;
    align-items: center;
    box-sizing: border-box;
    padding-top: 2px;
    font-size: 26px;
}
.agent-tab {
    width: 185px;
    border-right: 2px solid #262932;
    padding-left: 13px;
    color: #e8e9ee;
}
.agent-ico {
    width: 30px;
    height: 32px;
    margin-right: 14px;
    color: #7d66ff;
}
.pane-plus {
    width: 24px;
    height: 24px;
    margin: 18px 0 0 20px;
    color: #c9cbd3;
}
.messages {
    flex: 1;
    min-height: 0;
    overflow: hidden;
    position: relative;
    padding: 51px 24px 0 41px;
}
.thread-head {
    position: absolute;
    top: 17px;
    left: 17px;
    right: 17px;
    height: 64px;
    padding-top: 2px;
    box-sizing: border-box;
    background-color: #23262f;
    border-radius: 8px;
    display: flex;
    align-items: center;
    font-size: 24px;
    color: #e8e9ee;
    z-index: 1;
}
.th-hist {
    width: 30px;
    height: 30px;
    margin-left: 16px;
}
.th-gauge {
    width: 28px;
    height: 28px;
    margin-left: 61px;
}
.th-title {
    margin-left: 11px;
    white-space: nowrap;
}
.th-plus {
    width: 26px;
    height: 26px;
    margin-left: auto;
    margin-right: 18px;
    color: #d8dae0;
}
.msg-line {
    font-size: 28px;
    letter-spacing: .2px;
    line-height: 45px;
    color: #e2e3e9;
}
.msg-faded {
    opacity: .18;
    margin: -3px 0 3px;
    padding-left: 4px;
}
.check {
    display: inline-block;
    width: 30px;
    height: 30px;
    background-color: #2c7a3d;
    margin-right: 12px;
    vertical-align: middle;
}
.msg-para {
    margin-top: 30px;
}
.msg-list {
    margin-top: 32px;
    padding-left: 32px;
    font-size: 28px;
    letter-spacing: .1px;
    line-height: 45px;
    color: #e2e3e9;
}
.msg-list li {
    margin-bottom: 8px;
}
.msg-list li:last-child {
    margin-bottom: 0;
}
.msg-ask {
    margin-top: 32px;
}
.chips {
    display: flex;
    gap: 16px;
    margin-top: 13px;
}
.chip {
    height: 55px;
    box-sizing: border-box;
    border: 2px solid #2d303b;
    border-radius: 8px;
    padding: 0 16px;
    font-size: 24px;
    letter-spacing: .1px;
    line-height: 51px;
    color: #e2e3e9;
    white-space: nowrap;
}
.show-more {
    width: 209px;
    height: 56px;
    margin-top: 15px;
    background-color: #23262f;
    border-radius: 8px;
    display: flex;
    align-items: center;
    padding-left: 20px;
    box-sizing: border-box;
    font-size: 24px;
    color: #e2e3e9;
    gap: 14px;
}
.show-more svg {
    width: 16px;
    height: 16px;
}
.composer {
    height: 206px;
    flex: none;
    margin: 0 17px 16px;
    background-color: #23262f;
    border: 2px solid #2d303b;
    border-radius: 16px;
    box-sizing: border-box;
    display: flex;
    flex-direction: column;
}
.comp-status {
    height: 56px;
    flex: none;
    box-sizing: border-box;
    border-bottom: 2px solid #2d303b;
    padding-left: 28px;
    font-size: 24px;
    line-height: 56px;
    color: #c9cbd3;
}
.comp-input {
    height: 86px;
    flex: none;
    padding-left: 20px;
    font-size: 27.500px;
    line-height: 78px;
    color: #9da1ab;
}
.comp-tools {
    display: flex;
    align-items: center;
    padding: 0 12px 0 20px;
    height: 48px;
}
.ct-clip {
    width: 22px;
    height: 30px;
}
.ct-target {
    width: 28px;
    height: 28px;
    margin-left: 34px;
}
.ct-select {
    margin-left: 10px;
    font-size: 25px;
    color: #c9cbd3;
}
.ct-sliders {
    width: 30px;
    height: 28px;
    margin-left: 26px;
}
.ct-send {
    width: 48px;
    height: 48px;
    margin-left: auto;
    background-color: #2a2d37;
    border-radius: 8px;
    display: flex;
    align-items: center;
    justify-content: center;
}
.ct-send svg {
    width: 30px;
    height: 30px;
}
.splitter {
    width: 12px;
    flex: none;
    position: relative;
}
.splitter i {
    position: absolute;
    left: 3px;
    top: 593px;
    width: 4px;
    height: 48px;
    border-radius: 2px;
    background-color: #3a3d48;
}

/* preview pane */
.preview-panel {
    width: 1462px;
    flex: none;
    background-color: #181b24;
    border-radius: 8px;
    display: flex;
    flex-direction: column;
    overflow: hidden;
}
.tab-preview {
    width: 206px;
    border-top: 3px solid #0079f2;
    border-right: 2px solid #262932;
    margin-left: 2px;
    padding-left: 12px;
    color: #e8e9ee;
}
.tab-console {
    width: 209px;
    border-right: 2px solid #262932;
    padding-left: 13px;
    color: #aeb1ba;
}
.tab-shell {
    width: 176px;
    border-right: 2px solid #262932;
    padding-left: 14px;
    color: #aeb1ba;
}
.tab-git {
    width: 149px;
    border-right: 2px solid #262932;
    padding-left: 14px;
    color: #aeb1ba;
}
.pt-ico {
    width: 28px;
    height: 28px;
    margin-right: 14px;
}
.pt-white {
    color: #e8e9ee;
}
.pt-yellow {
    color: #8a8348;
    margin-right: 15px;
}
.pt-slate {
    color: #6b8199;
    margin-right: 16px;
}
.pt-green {
    color: #4b8a58;
}
.pane-dots {
    position: absolute;
    right: 28px;
    top: 16px;
    width: 8px;
    height: 32px;
}
.urlrow {
    height: 72px;
    flex: none;
    display: flex;
    align-items: center;
}
.ur-btn {
    width: 28px;
    height: 28px;
    margin-left: 18px;
    margin-right: 10px;
    color: #e8e9ee;
}
.ur-dim {
    color: #aeb1ba;
}
.urlbar {
    width: 1118px;
    height: 48px;
    margin-left: 6px;
    background-color: #23262f;
    border-radius: 6px;
    display: flex;
    align-items: center;
    font-size: 25px;
    padding-left: 8px;
    box-sizing: border-box;
    flex: none;
}
.ub-link {
    width: 24px;
    height: 24px;
    margin-right: 5px;
}
.ub-host {
    color: #9da1ab;
}
.ub-path {
    color: #e8e9ee;
}
.ub-go {
    width: 20px;
    height: 20px;
    margin-left: auto;
    margin-right: 15px;
    color: #7a7d87;
}
.ur-tool {
    width: 30px;
    height: 30px;
    margin-left: 21px;
}
.urlbar + .ur-tool {
    margin-left: 18px;
}

/* the dashboard shown inside the preview */
.site {
    flex: 1;
    min-height: 0;
    margin-left: 1px;
    display: flex;
    flex-direction: column;
    background-color: #1c2333;
}
.site-top {
    flex: 1;
    min-height: 0;
    display: flex;
}
.side {
    width: 487px;
    flex: none;
    overflow: hidden;
    font-family: Inter, sans-serif;
}
.logo {
    width: 300px;
    height: 147px;
    margin: 25px 0 0 97px;
}
.logo text {
    font-family: "Liberation Sans", sans-serif;
    font-weight: bold;
    font-style: italic;
}
.logo-a1 {
    font-size: 175px;
    fill: #ff0000;
    stroke: #ff0000;
    stroke-width: 5px;
}
.logo-call {
    font-size: 80px;
    fill: #e8202a;
}
.logo-247 {
    font-size: 36px;
    fill: #e8202a;
}
.side-title {
    margin-top: 9px;
    font-size: 34.600px;
    font-weight: 500;
    line-height: 40px;
    text-align: center;
    color: #7b68ee;
}
.side-sub {
    margin-top: 17px;
    font-size: 23px;
    line-height: 36px;
    text-align: center;
    color: #cbd0d8;
}
.side-nav {
    margin-top: 36px;
}
.side-nav a {
    height: 75px;
    display: flex;
    align-items: center;
    padding-left: 46px;
    font-size: 27px;
    color: #8f82f0;
}
.side-nav svg {
    width: 30px;
    height: 28px;
    margin-right: 7px;
}
.side-scroll {
    width: 12px;
    flex: none;
    background-color: #2d3748;
}
.side-scroll i {
    height: 733px;
    border-radius: 6px;
    background-color: #4a5568;
}
.dash {
    flex: 1;
    min-width: 0;
    padding: 67px 18px 0 0;
}
.dash-actions {
    display: flex;
    justify-content: flex-end;
    gap: 16px;
}
.dash-btn {
    height: 61px;
    box-sizing: border-box;
    padding-top: 1px;
    border-radius: 6px;
    display: flex;
    align-items: center;
    justify-content: center;
    gap: 6px;
    font-size: 27px;
    font-family: Inter, sans-serif;
}
.dash-btn svg {
    width: 28px;
    height: 26px;
}
.add-admin {
    width: 209px;
    border: 2px solid #6edb7f;
    background-color: #2d4a45;
    color: #fff;
}
.refresh {
    width: 168px;
    border: 2px solid #8a93a5;
    color: #8b95a8;
}
.dash-rule {
    height: 2px;
    margin-top: 36px;
    background-color: #a0aec0;
}
.stat {
    height: 179px;
    margin-top: 31.500px;
    border-radius: 0 20px 20px 0;
    display: flex;
    align-items: center;
    justify-content: flex-end;
    padding-right: 30px;
    color: #fff;
}
.dash-rule + .stat {
    margin-top: 32px;
}
.stat-ico {
    width: 68px;
    height: 50px;
}
.stat-badge {
    width: 50px;
    height: 66px;
    margin-right: 9px;
}
.stat-purple {
    background-color: #7863ff;
}
.stat-cyan {
    background-color: #27b8d8;
}
.stat-green {
    background-color: #6ddb80;
}
.stat-olive {
    background-color: #937a00;
}
.fri {
    width: 66px;
    height: 64px;
    margin: 2px 2px 0 0;
    position: relative;
    box-sizing: border-box;
    border: 4px solid #1c2333;
    border-top-width: 10px;
    border-radius: 6px;
    font-family: Inter, sans-serif;
    font-size: 29px;
    line-height: 46px;
    text-align: center;
    color: #1c2333;
}
.fri::before,
.fri::after {
    content: "";
    position: absolute;
    top: -14px;
    width: 4px;
    height: 6px;
    background-color: #1c2333;
}
.fri::before {
    left: 11px;
}
.fri::after {
    right: 11px;
}
.vscroll {
    width: 30px;
    flex: none;
    background-color: #2c2c2c;
    position: relative;
}
.vthumb {
    position: absolute;
    left: 6px;
    top: 37px;
    width: 18px;
    height: 418px;
    border-radius: 9px;
    background-color: #9e9e9e;
}
.arrow-up, .arrow-down {
    position: absolute;
    left: 7px;
    width: 0;
    height: 0;
    border-left: 9px solid transparent;
    border-right: 9px solid transparent;
}
.arrow-up {
    top: 13px;
    border-bottom: 7px solid #a0a0a0;
}
.arrow-down {
    bottom: 12px;
    border-top: 7px solid #a0a0a0;
}
.hscroll {
    height: 31px;
    flex: none;
    background-color: #2c2c2c;
    display: flex;
    align-items: flex-start;
    position: relative;
}
.hthumb {
    position: absolute;
    left: 35px;
    top: 7px;
    width: 1338px;
    height: 18px;
    border-radius: 9px;
    background-color: #9e9e9e;
}
.arrow-left, .arrow-right {
    position: absolute;
    top: 8px;
    width: 0;
    height: 0;
    border-top: 8px solid transparent;
    border-bottom: 8px solid transparent;
}
.arrow-left {
    left: 10px;
    border-right: 9px solid #a0a0a0;
}
.arrow-right {
    right: 42px;
    border-left: 9px solid #a0a0a0;
}

/* windows taskbar */
.taskbar {
    height: 80px;
    flex: none;
    background-color: #484848;
    display: flex;
    align-items: center;
    color: #fff;
    font-family: "Open Sans", sans-serif;
}
.start {
    width: 96px;
    display: flex;
    justify-content: center;
    flex: none;
}
.start svg {
    width: 32px;
    height: 32px;
}
.tb-search {
    width: 576px;
    height: 80px;
    flex: none;
    box-sizing: border-box;
    background-color: #f2f2f2;
    border: 3px solid #c8c8c8;
    border-bottom-width: 2px;
    display: flex;
    align-items: center;
    color: #1a1a1a;
}
.tb-lens {
    width: 32px;
    height: 34px;
    margin-left: 21px;
}
.tb-hint {
    margin-left: 24px;
    font-size: 28.500px;
    letter-spacing: -0.2px;
}
.tb-rings {
    width: 116px;
    height: 76px;
    margin-left: auto;
    margin-right: 18px;
}
.tb-apps {
    display: flex;
    height: 80px;
    margin-left: 3px;
    flex: none;
}
.tb-app {
    width: 98px;
    height: 80px;
    display: flex;
    align-items: center;
    justify-content: center;
    position: relative;
}
.app-taskview {
    width: 34px;
    height: 30px;
    margin-right: 2px;
}
.app-copilot {
    width: 43px;
    height: 40px;
}
.app-edge {
    width: 48px;
    height: 48px;
}
.app-files {
    width: 43px;
    height: 34px;
}
.app-store {
    width: 45px;
    height: 47px;
}
.app-mail {
    width: 48px;
    height: 44px;
}
.tb-run::after {
    content: "";
    position: absolute;
    left: 9px;
    right: 9px;
    bottom: 0;
    height: 4px;
    background-color: #76b9ed;
}
.tb-active {
    background-color: #6c6c6c;
}
.tb-active::after {
    left: 0;
    right: 0;
}
.chrome {
    width: 50px;
    height: 50px;
    border-radius: 50%;
    background:
        radial-gradient(circle, #4285f4 0 9px, #fff 10px 13px, transparent 14px),
        conic-gradient(from 30deg, #fbc02d 0 120deg, #34a853 120deg 240deg, #ea4335 240deg 360deg);
}
.over {
    position: absolute;
    left: 49px;
    top: 38px;
    width: 30px;
    height: 32px;
    border-radius: 50%;
    font-size: 18px;
    line-height: 32px;
    text-align: center;
    color: #dcebc8;
}
.over-dark {
    background-color: #3a2a22;
}
.over-green {
    background-color: #6a9f34;
}
.over-tan {
    background-color: #a58a72;
}
.qb {
    width: 50px;
    height: 50px;
    border-radius: 50%;
    background-color: #3f82d8;
    border: 2px solid #c3dcf5;
    box-sizing: border-box;
    font-size: 30px;
    line-height: 42px;
    text-align: center;
    color: #fff;
    flex: none;
}
.tr-weather {
    width: 50px;
    height: 60px;
    margin-left: 126px;
}
.tr-badge {
    width: 24px;
    height: 30px;
    margin-left: -22px;
    margin-top: -30px;
    background-color: #c62a1c;
    border-radius: 50%;
    font-size: 18px;
    line-height: 30px;
    text-align: center;
    flex: none;
}
.tr-temp {
    margin-left: 13px;
    font-size: 27px;
    letter-spacing: -0.5px;
    width: 60px;
    flex: none;
}
.tr-caret {
    width: 26px;
    height: 22px;
    margin-left: 50px;
}
.qb-small {
    width: 30px;
    height: 32px;
    margin-left: 21px;
    font-size: 18px;
    line-height: 27px;
    border-width: 1px;
}
.tr-meet {
    width: 24px;
    height: 34px;
    margin-left: 20px;
}
.tr-batt {
    width: 32px;
    height: 22px;
    margin-left: 19px;
}
.tr-spk {
    width: 32px;
    height: 32px;
    margin-left: 16px;
}
.tr-wifi {
    width: 28px;
    height: 28px;
    margin-left: 30px;
}
.tr-lang {
    margin-left: 12px;
    font-size: 23px;
    letter-spacing: -0.5px;
    width: 46px;
    flex: none;
}
.tr-clock {
    width: 130px;
    margin-left: 22px;
    font-size: 23px;
    line-height: 39px;
    text-align: center;
    letter-spacing: -0.2px;
    flex: none;
}
.tr-date {
    font-size: 24.500px;
}
.tr-note {
    width: 32px;
    height: 34px;
    margin-left: 35px;
}
.tr-edge {
    width: 1px;
    height: 80px;
    margin-left: 40px;
    background-color: #888;
    flex: none;
}
```
